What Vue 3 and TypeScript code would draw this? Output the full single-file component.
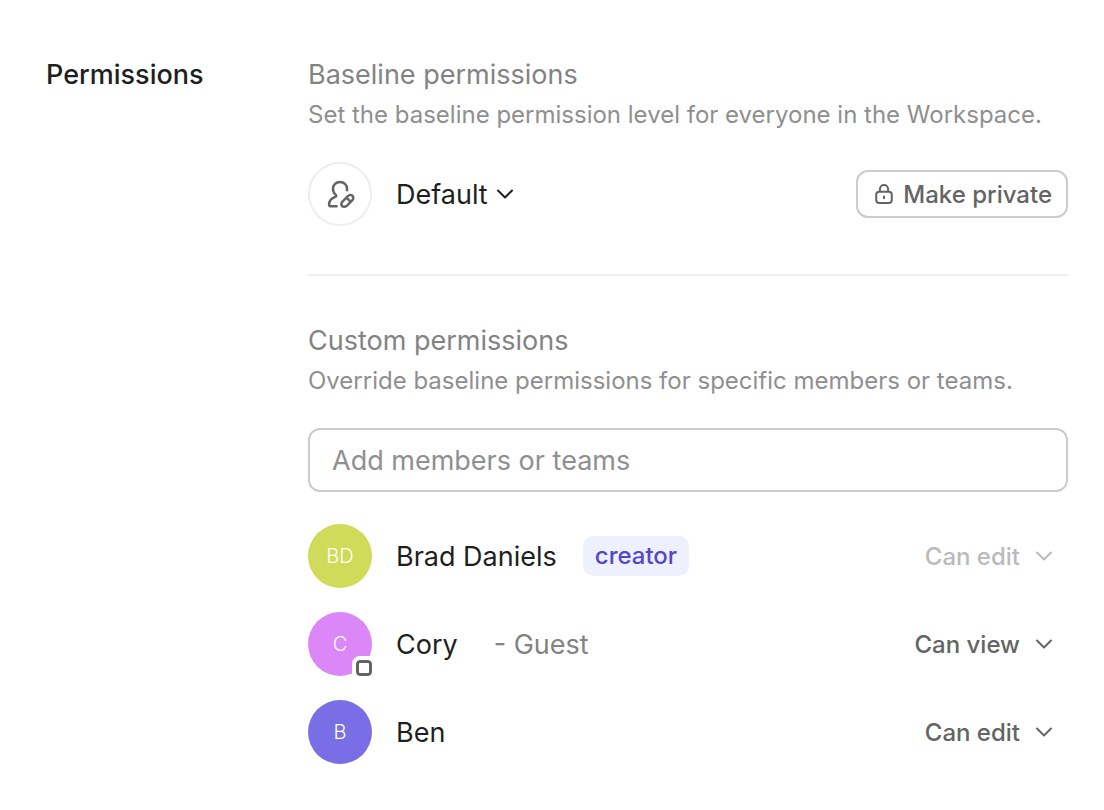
<script setup lang="ts">
import { ref } from 'vue'

interface Member {
  id: string
  name: string
  initials: string
  color: string
  role: string
  creator?: boolean
  guest?: boolean
}

const levels = ['Can edit', 'Can view']
const baseline = ref('Default')
const query = ref('')
const members = ref<Member[]>([
  { id: 'brad', name: 'Brad Daniels', initials: 'BD', color: '#d0db59', role: 'Can edit', creator: true },
  { id: 'cory', name: 'Cory', initials: 'C', color: '#dc87f7', role: 'Can view', guest: true },
  { id: 'ben', name: 'Ben', initials: 'B', color: '#796ee6', role: 'Can edit' },
])
</script>

<template>
  <main class="page">
    <h1 class="heading">Permissions</h1>
    <div class="content">
      <section class="baseline">
        <h2 class="title">Baseline permissions</h2>
        <p class="desc">Set the baseline permission level for everyone in the Workspace.</p>
        <div class="row">
          <span class="round">
            <svg width="32" height="32" viewBox="0 0 32 32" fill="none" stroke="#646464" stroke-width="2.5" stroke-linecap="round" stroke-linejoin="round" aria-hidden="true">
              <path stroke-linecap="butt" d="M23 13.2V10.8C23 6.8 19.9 4.1 16 4.1S9 6.8 9 10.8C9 13.3 10 15.3 11.8 16.9C12.6 17.7 12.2 18.5 11.2 18.9C7.5 20.3 5.1 22.9 5.1 26.4C5.1 27.6 5.8 28.3 7 28.3H13.6" />
              <path d="M17.9 28C17.1 26.6 17.4 24.6 18.7 23.3L23.9 18.1C25.3 16.7 27.3 16.6 28.5 17.8C29.7 19 29.6 21 28.2 22.4L23 27.6C21.6 29 19 29 17.9 28ZM22.9 20.1 26 23.2" />
            </svg>
          </span>
          <div class="picker picker-main">
            <select v-model="baseline" class="select" aria-label="Baseline permission level">
              <option>Default</option>
            </select>
            <svg class="chevron" width="18" height="12" viewBox="0 0 18 12" aria-hidden="true"><path d="M2 2.5 9 9.5 16 2.5" /></svg>
          </div>
          <button type="button" class="private">
            <svg width="20" height="22" viewBox="0 0 20 22" fill="none" stroke="currentColor" stroke-width="2" aria-hidden="true">
              <rect x="2.2" y="8.8" width="15.6" height="11.2" rx="3" />
              <path d="M5.9 8.8V6a4.1 4.1 0 0 1 8.2 0V8.8" />
              <path d="M10 12.8v3.2" />
            </svg>
            Make private
          </button>
        </div>
      </section>

      <section class="custom">
        <h2 class="title">Custom permissions</h2>
        <p class="desc">Override baseline permissions for specific members or teams.</p>
        <input v-model="query" class="search" type="text" placeholder="Add members or teams" aria-label="Add members or teams" />
        <ul class="members">
          <li v-for="m in members" :key="m.id" class="row">
            <span class="round avatar" :style="{ backgroundColor: m.color }">
              {{ m.initials }}
              <span v-if="m.guest" class="guest-badge"></span>
            </span>
            <span class="name">{{ m.name }}</span>
            <span v-if="m.creator" class="tag">creator</span>
            <span v-if="m.guest" class="guest">- Guest</span>
            <div class="picker picker-role" :class="{ locked: m.creator }">
              <select v-model="m.role" class="select" :disabled="m.creator" :aria-label="'Permission for ' + m.name">
                <option v-for="l in levels" :key="l">{{ l }}</option>
              </select>
              <svg class="chevron" width="18" height="12" viewBox="0 0 18 12" aria-hidden="true"><path d="M2 2.5 9 9.5 16 2.5" /></svg>
            </div>
          </li>
        </ul>
      </section>
    </div>
  </main>
</template>

<style>
body {
  margin: 0;
  background: #fff;
}
</style>

<style scoped>
.page {
  display: grid;
  grid-template-columns: 262px minmax(0, 1fr);
  padding: 55px 36px 44px 46px;
  font-family: Inter, "Liberation Sans", sans-serif;
  font-size: 27px;
  color: #1e1f21;
}
.heading,
.title {
  margin: 0;
  font-size: 27px;
  line-height: 40px;
  font-weight: 400;
}
.heading {
  font-weight: 500;
}
.title {
  color: #838383;
}
.desc {
  margin: 0 0 27px;
  font-size: 24px;
  line-height: 40px;
  color: #8f8f8f;
}
.baseline {
  padding-bottom: 48px;
  border-bottom: 2px solid #eeeeee;
}
.custom {
  padding-top: 45px;
}
.row {
  display: flex;
  align-items: center;
}
.round {
  box-sizing: border-box;
  display: flex;
  flex: none;
  align-items: center;
  justify-content: center;
  width: 64px;
  height: 64px;
  margin-right: 24px;
  border-radius: 50%;
  border: 2px solid #eeeeee;
}
.avatar {
  position: relative;
  border: 0;
  color: #fff;
  font-size: 20px;
  font-weight: 300;
}
.guest-badge {
  position: absolute;
  right: -4px;
  bottom: -4px;
  box-sizing: border-box;
  width: 24px;
  height: 24px;
  border: 4px solid #fff;
  border-radius: 8px;
  background: #fff;
  box-shadow: inset 0 0 0 3px #646464;
}
.picker {
  position: relative;
  display: flex;
  align-items: center;
}
.select {
  appearance: none;
  field-sizing: content;
  margin: 0;
  padding: 2px 0 0;
  border: 0;
  background: transparent;
  font: inherit;
  line-height: 40px;
  color: inherit;
  opacity: 1;
}
.chevron {
  position: absolute;
  right: 0;
  pointer-events: none;
  fill: none;
  stroke: currentColor;
  stroke-width: 2;
  stroke-linecap: round;
  stroke-linejoin: round;
}
.picker-main .select {
  padding-right: 26px;
}
.picker-role {
  margin-left: auto;
  padding-right: 15px;
  font-size: 24px;
  font-weight: 500;
  color: #646464;
}
.picker-role .select {
  padding-right: 33px;
}
.picker-role .chevron {
  right: 15px;
}
.locked {
  color: #bababa;
}
.private {
  box-sizing: border-box;
  display: flex;
  align-items: center;
  gap: 9px;
  height: 48px;
  margin: 0 0 0 auto;
  padding: 0 14px 0 16px;
  border: 2px solid #cccccc;
  border-radius: 12px;
  background: #fff;
  font: inherit;
  font-size: 24px;
  font-weight: 500;
  color: #646464;
}
.search {
  box-sizing: border-box;
  display: block;
  width: 100%;
  height: 64px;
  padding: 0 22px;
  border: 2px solid #cccccc;
  border-radius: 12px;
  background: #fff;
  font: inherit;
  color: inherit;
}
.search::placeholder {
  color: #8f8f8f;
  opacity: 1;
}
.members {
  display: flex;
  flex-direction: column;
  gap: 24px;
  margin: 32px 0 0;
  padding: 0;
  list-style: none;
}
.tag {
  margin-left: 26px;
  padding: 0 12px;
  border-radius: 10px;
  background: #eff0fe;
  font-size: 24px;
  line-height: 40px;
  font-weight: 500;
  color: #5547c8;
}
.guest {
  margin-left: 36px;
  color: #838383;
}
</style>
